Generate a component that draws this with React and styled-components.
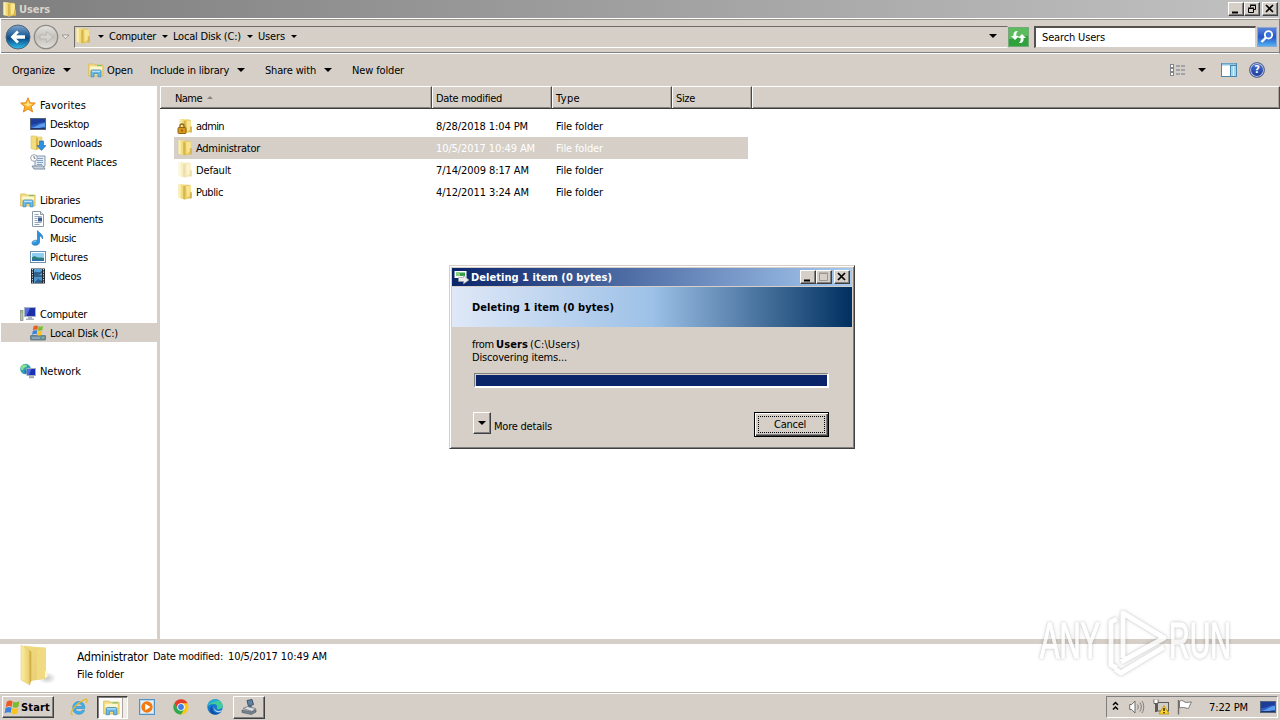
import React, { useLayoutEffect, useRef, useState } from 'react';
import styled, { createGlobalStyle, css } from 'styled-components';

const theme = {
    face: '#d5cfc7',
    light: '#ffffff',
    shadow: '#808080',
    dark: '#404040',
    navy: '#0a246a',
    font: "'DejaVu Sans Condensed', 'DejaVu Sans', 'Liberation Sans', sans-serif"
};

const GlobalStyle = createGlobalStyle`
    * {
        box-sizing: border-box;
    }
    body {
        margin: 0;
        overflow: hidden;
        background: #fff;
        color: #000;
        font-family: ${theme.font};
        font-size: 11px;
        line-height: 14px;
    }
    svg {
        display: block;
        flex: none;
    }
`;

const raised = css`
    background: ${theme.face};
    border: 1px solid;
    border-color: ${theme.light} ${theme.dark} ${theme.dark} ${theme.light};
    box-shadow: inset -1px -1px 0 ${theme.shadow};
`;

const sunken = css`
    border: 1px solid;
    border-color: ${theme.shadow} ${theme.light} ${theme.light} ${theme.shadow};
`;

/* ---------- text ---------- */

const TextBox = styled.span`
    display: block;
    flex: none;
    width: ${p => p.$w}px;
    margin-left: ${p => p.$ml || 0}px;
    padding-top: 2px;
    white-space: nowrap;
    font-weight: ${p => (p.$bold ? 'bold' : 'normal')};
    font-size: ${p => p.$size || 11}px;
    color: ${p => p.$color || 'inherit'};
`;

// Spreads the letters so that the label takes exactly w pixels
const Text = ({ w, ml, bold, size, color, children }) => {
    const ref = useRef(null);
    const [spacing, setSpacing] = useState(0);

    useLayoutEffect(() => {
        const natural = ref.current.getBoundingClientRect().width;
        setSpacing((w - natural) / children.length);
    }, [w, children]);

    return (
        <TextBox $w={w} $ml={ml} $bold={bold} $size={size} $color={color}>
            <span ref={ref} style={{ letterSpacing: spacing }}>{children}</span>
        </TextBox>
    );
};

/* ---------- icons ---------- */

const Svg = ({ size = 16, h, box = '0 0 16 16', children }) => (
    <svg width={size} height={h || size} viewBox={box}>{children}</svg>
);

const FolderIcon = ({ lock, faded, size }) => (
    <Svg size={size} box={lock ? '0 0 15 16' : '1 .8 14 15'}>
        <g opacity={faded ? 0.45 : 1}>
            <path d="M7 1.5h5l1.500 1V14l-5 1z" fill="#e3c55a" />
            <path d="M9 2.5h4.500v8.5l-4 3z" fill="#f7e594" />
            <path d="M2 1h4.5l1.8 1.5V15.5L2 13.8z" fill="#f3dc7e" />
            <path d="M2 1h2v13.2l-2-.5z" fill="#fbf0b4" />
            <path d="M6.3 2.5l2 .3v12.6l-2-.6z" fill="#d8b548" />
            <path d="M12.500 8.5h2v5.7l-2 .5z" fill="#d9b84c" />
        </g>
        {lock && (
            <g>
                <path d="M2.5 10V8a2 2 0 0 1 4 0v2" fill="none" stroke="#8c6a1c" strokeWidth="1.3" />
                <rect x="0.5" y="9.5" width="8" height="6" rx="1" fill="#d9961c" stroke="#94640e" />
                <path d="M4.5 11.5v2" stroke="#5f3c00" />
            </g>
        )}
    </Svg>
);

const BigFolderIcon = () => (
    <Svg size={38} h={44} box="0 0 38 44">
        <defs>
            <linearGradient id="bfFront" x1="0" x2="1">
                <stop offset="0" stopColor="#fbeea9" />
                <stop offset="1" stopColor="#e9cc63" />
            </linearGradient>
            <linearGradient id="bfBack" x1="0" x2="1" y2="1">
                <stop offset="0" stopColor="#f1da80" />
                <stop offset="1" stopColor="#e8cd74" />
            </linearGradient>
            <radialGradient id="bfShade">
                <stop offset="0" stopColor="#999" stopOpacity=".55" />
                <stop offset="1" stopColor="#999" stopOpacity="0" />
            </radialGradient>
        </defs>
        <ellipse cx="28" cy="34" rx="9" ry="6" fill="url(#bfShade)" />
        <path d="M5 1.5L17 3l9 .5v31L12 37z" fill="url(#bfBack)" />
        <path d="M18 5.5l9-2v31l-9 1.500z" fill="#f0da82" />
        <path d="M2 1.2l9 5.3V41L2 36z" fill="url(#bfFront)" stroke="#dcc262" strokeWidth=".5" />
        <path d="M10.500 6.500l1.800 1V37l-1.800 4z" fill="#cfae49" />
        <path d="M26 27l2.500-1v7L26 34z" fill="#fdf8dc" />
    </Svg>
);

const StarIcon = () => (
    <Svg>
        <path d="M8 .8l2 5 5.3.3-4.1 3.5 1.4 5.3L8 12l-4.6 2.9 1.4-5.3L.7 6.1 6 5.8z"
            fill="#fdb62c" stroke="#e5861c" strokeLinejoin="round" />
        <path d="M8 3l1.2 3.7 3.4.3L8 9.5 4 7l2.8-.3z" fill="#ffe48a" />
    </Svg>
);

const DesktopIcon = () => (
    <Svg>
        <rect x=".5" y="2.5" width="15" height="11" fill="#2c5bc0" stroke="#55627c" />
        <path d="M1 3h14v3C9 6 6 9 1 9z" fill="#1d3d9a" />
        <path d="M1 12c5-1 9-5 14-5v4c-5 0-7 2-9 2H1z" fill="#5d9ceb" />
        <path d="M1 12.5h14" stroke="#1c3467" />
    </Svg>
);

const DownloadsIcon = () => (
    <Svg>
        <path d="M1 1h5l2 1h4v12H7l-1 1-5-1.5z" fill="#f3dc7e" stroke="#dcbf60" strokeWidth=".6" />
        <path d="M6 2.5l2 .5v11l-2 1z" fill="#d8b548" />
        <path d="M9.5 6h4v4.5H16l-4.5 5-4.5-5h2.5z" fill="#2f8fe0" stroke="#1d63b0" strokeWidth=".6" />
    </Svg>
);

const RecentIcon = () => (
    <Svg>
        <path d="M5 2h10v10l-2 1H5z" fill="#e4ebf2" stroke="#8497ac" />
        <path d="M7 4.5h6M7 6.5h6M7 8.5h6M7 10.5h5" stroke="#7fa1c6" />
        <path d="M2 12h11l2 3H4z" fill="#c9d4df" stroke="#7f8fa2" />
        <circle cx="4" cy="4" r="3.3" fill="#fff" stroke="#9aa5b2" />
        <path d="M4 2v2.2h1.6" stroke="#4c5a6b" fill="none" strokeWidth=".8" />
    </Svg>
);

const LibraryIcon = ({ size }) => (
    <Svg size={size}>
        <path d="M.6 3.5V2h5l1.2 1h8.3v11H.6z" fill="#f4dd80" stroke="#d9bb58" strokeWidth=".8" />
        <path d="M2 4.5h12v3H2z" fill="#fdf6cf" />
        <path d="M9 3h5v1.2H9z" fill="#79c37a" />
        <path d="M3 14.8V9.6c0-1 .6-1.6 1.6-1.6h6.8c1 0 1.6.6 1.6 1.6v5.2h-3v-3.3H6v3.3z"
            fill="#6bb9e6" stroke="#3d8fc8" strokeWidth=".8" />
        <path d="M4 9.3h8" stroke="#cdeafa" />
    </Svg>
);

const DocumentIcon = () => (
    <Svg>
        <path d="M2.5.5h8l3 3v12h-11z" fill="#fff" stroke="#8c99a8" />
        <path d="M10.5.5v3h3" fill="#dce4ec" stroke="#8c99a8" />
        <path d="M4.500 3.500h4M4.500 5.500h7M4.500 7.500h3M4.500 9.500h3M4.500 11.500h7M4.500 13.500h5" stroke="#93a5b8" />
        <rect x="8" y="6.500" width="4" height="4" fill="#3a5e95" />
    </Svg>
);

const MusicIcon = () => (
    <Svg>
        <path d="M8 .8c.5 2.300 5.700 3.200 4.500 8.200-.5-2-1.500-2.700-3-3v6c0 2-1.800 3.300-4.200 3.300-2 0-3.500-1-3.300-2.600.2-1.700 2.600-3 5.500-2.400V.8z"
            fill="#2f94dc" stroke="#1868ac" strokeWidth=".6" />
        <path d="M3.200 12.500c.3-1 1.800-1.500 3-1.300" stroke="#a9dcfa" fill="none" />
    </Svg>
);

const PicturesIcon = () => (
    <Svg>
        <rect x=".5" y="2.500" width="15" height="11" fill="#fff" stroke="#6f8fb0" />
        <rect x="2" y="4" width="12" height="8" fill="#8fd0f2" />
        <path d="M2 8.500c3-3 4 0 7 0 2 0 3-.5 5 .5v3H2z" fill="#2f7f76" />
        <path d="M2 10.500h12V12H2z" fill="#276fb5" />
    </Svg>
);

const VideosIcon = () => (
    <Svg>
        <rect x="1" y=".5" width="14" height="15" fill="#232a33" />
        <path d="M2.500 1v14M13.500 1v14" stroke="#cfd6dc" strokeDasharray="1.300 1.200" />
        <rect x="4" y="1" width="8" height="6.500" fill="#58a4da" />
        <rect x="4" y="8.500" width="8" height="6.500" fill="#4a95cc" />
        <path d="M4 5c2-3 3 1 8-2v2l-4 2.500H4zM5 14l3-3 4 2v2H5z" fill="#2c5f8c" />
    </Svg>
);

const ComputerIcon = () => (
    <Svg>
        <rect x=".500" y="4.500" width="2.500" height="10" fill="#b9c3ae" stroke="#7e8a78" strokeWidth=".7" />
        <path d="M1 6h1.500" stroke="#6dbb44" />
        <rect x="4.500" y="1.500" width="11" height="9" fill="#1c2fa8" stroke="#a8b2c2" />
        <path d="M5 2h5L6.500 10H5z" fill="#5470dc" />
        <path d="M8 11h4v1.500h2V14H6v-1.500h2z" fill="#aab3be" />
    </Svg>
);

const Flag = () => (
    <g>
        <path d="M2 2C4 .6 5.500.7 7.300 1.600L6.500 6.500C4.800 5.600 3.300 5.600 1 6.900z" fill="#ee5a26" />
        <path d="M8 1.900c1.800.8 3.500.8 5.500-.3l-.9 5c-2 1-3.600 1-5.400.1z" fill="#7dbb2c" />
        <path d="M.9 7.700c2.200-1.200 3.700-1.200 5.500-.4L5.600 12c-1.800-.9-3.300-.8-5.500.5z" fill="#3c82dc" />
        <path d="M7.100 7.600c1.800.9 3.400.9 5.400-.1l-.9 5c-2 1-3.500 1-5.300.1z" fill="#fbc21c" />
    </g>
);

const DiskIcon = () => (
    <Svg>
        <path d="M1.500 9h13l1 2.500H.5z" fill="#ccd5dc" />
        <rect x=".500" y="10.500" width="15" height="4.500" rx=".5" fill="#6d8d9c" stroke="#506b78" strokeWidth=".7" />
        <path d="M2 13h8" stroke="#a9c2cc" />
        <circle cx="13" cy="12.800" r=".8" fill="#7df26b" />
        <g transform="translate(2 -.3) scale(.82)"><Flag /></g>
    </Svg>
);

const NetworkIcon = () => (
    <Svg>
        <circle cx="5.500" cy="6" r="5.300" fill="#2fa0b8" />
        <path d="M2 2.500c2-1.500 5-1 5 .5S4 4 3.500 6 1 7 .5 5z" fill="#8be08a" />
        <path d="M5 7c2-.5 3 2 1 4C4 10.500 4 8 5 7z" fill="#2c6fc0" />
        <rect x="7" y="5.500" width="8.500" height="7" fill="#1c2fb8" stroke="#a3adbd" />
        <path d="M7.500 6h4L9 12H7.500z" fill="#4f6cdf" />
        <path d="M9 13.200h5v2H9z" fill="#9aa5b3" />
    </Svg>
);

const BackIcon = () => (
    <Svg size={26} box="0 0 26 26">
        <defs>
            <linearGradient id="backFill" x2="0" y2="1">
                <stop offset="0" stopColor="#7fa6cc" />
                <stop offset=".4" stopColor="#2a669f" />
                <stop offset=".55" stopColor="#0c4a86" />
                <stop offset="1" stopColor="#2fc0ee" />
            </linearGradient>
        </defs>
        <circle cx="13" cy="13" r="12" fill="url(#backFill)" stroke="#50647c" />
        <path d="M5.500 13l6.500-6.500 1.900 1.900-2.700 2.900H20v3.400h-8.800l2.700 2.900-1.900 1.900z" fill="#fff" />
    </Svg>
);

const ForwardIcon = () => (
    <Svg size={26} box="0 0 26 26">
        <defs>
            <linearGradient id="fwdFill" x2="0" y2="1">
                <stop offset="0" stopColor="#e6e4e0" />
                <stop offset=".5" stopColor="#c4c1bc" />
                <stop offset="1" stopColor="#e2e0dc" />
            </linearGradient>
        </defs>
        <circle cx="13" cy="13" r="11.700" fill="url(#fwdFill)" stroke="#8b8985" strokeWidth="1.300" />
        <path d="M20 13l-6.500-5.500V11H7v4h6.500v3.500z" fill="#d6d3ce" stroke="#b4b1ab" strokeWidth=".8" />
    </Svg>
);

const RefreshIcon = () => (
    <Svg size={21} h={20} box="0 0 21 20">
        <rect x=".5" y=".5" width="20" height="19" fill="#2fa23c" stroke="#73a878" />
        <path d="M1 1h19v8C13 9 8 12 1 12z" fill="#5cbb5c" />
        <path d="M10 4C6.500 3.500 5 6 5.500 9H3l4 4 4-4H8.500C8 7 8.500 5.500 10 4z" fill="#fff" />
        <path d="M11 16c3.500.5 5-2 4.500-5H18l-4-4-4 4h2.500c.5 2 0 3.500-1.500 5z" fill="#fff" />
    </Svg>
);

const SearchIcon = () => (
    <Svg size={20} box="0 0 20 20">
        <defs>
            <linearGradient id="searchFill" x2="0" y2="1">
                <stop offset="0" stopColor="#5f86d8" />
                <stop offset=".5" stopColor="#2456c8" />
                <stop offset="1" stopColor="#56b6f4" />
            </linearGradient>
        </defs>
        <rect x=".5" y=".5" width="19" height="19" fill="url(#searchFill)" stroke="#8ea6d0" />
        <circle cx="11.500" cy="7.800" r="3.700" fill="#3a74d8" stroke="#fff" strokeWidth="1.800" />
        <path d="M9 10.500L4.500 15" stroke="#fff" strokeWidth="2.400" />
    </Svg>
);

const ViewIcon = () => (
    <Svg>
        {[2, 6, 10].map(y => (
            <g key={y}>
                <rect x=".5" y={y + 0.5} width="3" height="3" fill="#fff" stroke="#81868c" />
                <path d={`M6 ${y + 2}h4M11 ${y + 2}h4`} stroke="#6d7a8e" strokeWidth="1.200" />
            </g>
        ))}
    </Svg>
);

const PreviewIcon = () => (
    <Svg>
        <rect x=".5" y="1.500" width="15" height="13" fill="#fff" stroke="#4b86ad" />
        <path d="M1 2.500h14" stroke="#8ec3e3" strokeWidth="2" />
        <rect x="9.500" y="3.500" width="6" height="11" fill="#9fd3ee" stroke="#4b86ad" />
        <path d="M12.500 4v10" stroke="#d8f0fb" />
    </Svg>
);

const HelpGlyph = styled.div`
    width: 16px;
    height: 16px;
    border-radius: 50%;
    border: 1px solid #5d6a8c;
    box-shadow: inset 0 0 0 1px #b7c3e4;
    background: linear-gradient(#4a70cf, #1b3a9e);
    color: #fff;
    font-weight: bold;
    font-size: 11px;
    line-height: 14px;
    text-align: center;
`;

const Triangle = styled.i`
    flex: none;
    width: 0;
    height: 0;
    margin-left: ${p => p.$ml || 0}px;
    border: solid transparent;
    border-width: ${p => p.$s || 4}px ${p => p.$s || 4}px 0;
    border-top-color: #000;
`;

const SmallCaret = () => (
    <Svg size={9} h={6} box="0 0 9 6">
        <path d="M1 1h7L4.500 4.800z" fill="#f0eeea" stroke="#8c8983" strokeWidth=".8" />
    </Svg>
);

/* ---------- title bar ---------- */

const TitleBar = styled.div`
    display: flex;
    align-items: center;
    height: 18px;
    padding: 0 2px;
    color: #d8d4cd;
    background: linear-gradient(90deg, #7f7f7f, #c1c1c1);
`;

const WinButton = styled.div`
    ${raised}
    width: 16px;
    height: 14px;
    margin-left: ${p => p.$ml || 0}px;
    svg {
        margin: -1px;
    }
`;

const glyphs = {
    min: <path d="M4 10.500h6" stroke="#000" strokeWidth="2" />,
    restore: (
        <path d="M6.500 5.500v-2h5v4h-2M6 3h6M4.500 6.500h5v4h-5zM4 6h6" fill="none" stroke="#000" />
    ),
    max: <path d="M3.500 3.500h8v7h-8zM3 3h9" fill="none" stroke="#9b968f" />,
    close: <path d="M4 3l7 7M11 3l-7 7" stroke="#000" strokeWidth="1.700" />
};

const WindowButtons = ({ middle }) => ['min', middle, 'close'].map(g => (
    <WinButton key={g} $ml={g === 'close' ? 2 : 0}>
        <Svg size={16} h={14} box="0 0 16 14">{glyphs[g]}</Svg>
    </WinButton>
));

const Grow = styled.div`
    flex: 1;
`;

/* ---------- address bar ---------- */

const AddressBar = styled.div`
    display: flex;
    align-items: center;
    height: 36px;
    padding: 2px 1px 0 4px;
    background: ${theme.face};
    border: 1px solid ${theme.light};
    border-right-color: ${theme.shadow};
    box-shadow: inset 0 1px 0 #98948e, inset 0 -1px 0 ${theme.shadow};
`;

const NavPill = styled.div`
    display: flex;
    gap: 2px;
    align-items: center;
    width: 69px;
    svg:last-child {
        margin-left: 0;
    }
`;

const PathField = styled.div`
    display: flex;
    align-items: center;
    width: 934px;
    height: 22px;
    padding-bottom: 2px;
    border: 1px solid;
    border-color: #6d6a66 transparent ${theme.light} #6d6a66;
`;

const SearchField = styled.div`
    display: flex;
    align-items: center;
    width: 222px;
    height: 22px;
    margin: 0 1px 0 5px;
    padding: 0 0 2px 6px;
    background: #fff;
    border: solid;
    border-width: 2px 1px 1px 2px;
    border-color: #55524e ${theme.face} ${theme.face} #55524e;
`;

/* ---------- command bar ---------- */

const CommandBar = styled.div`
    display: flex;
    align-items: center;
    height: 32px;
    padding: 0 15px 0 12px;
    background: ${theme.face};
`;

const Spacer = styled.div`
    width: ${p => p.$w}px;
`;

/* ---------- body ---------- */

const Main = styled.div`
    display: flex;
    height: 553px;
`;

const Sidebar = styled.div`
    width: 160px;
    padding-top: 9px;
    background: linear-gradient(90deg, #fff 157px, ${theme.face} 157px);
`;

const SideItem = styled.div`
    display: flex;
    align-items: center;
    gap: 4px;
    height: 19px;
    margin-left: 1px;
    padding-left: ${p => (p.$child ? 29 : 19)}px;
    margin-bottom: ${p => (p.$last ? 19 : 0)}px;
    background: ${p => (p.$active ? theme.face : 'transparent')};
`;

const FileList = styled.div`
    flex: 1;
`;

const ListHeader = styled.div`
    display: grid;
    grid-template-columns: 272px 120px 120px 80px 1fr;
    height: 23px;
    background: ${theme.face};
    border-bottom: 1px solid #3e3b38;
    box-shadow: inset 0 -1px 0 ${theme.shadow};
`;

const HeaderCell = styled.div`
    display: flex;
    align-items: center;
    padding-left: ${p => (p.$first ? 14 : 3)}px;
    border: solid;
    border-width: 1px 1px 0;
    border-color: ${theme.light} #4a4744 transparent ${theme.light};
    box-shadow: inset -1px 0 0 #aaa59e;
`;

const Rows = styled.div`
    padding: 6px 0 0 14px;
`;

const FileRow = styled.div`
    display: grid;
    grid-template-columns: 22px 240px 120px 192px;
    align-items: center;
    width: 574px;
    height: 22px;
    background: ${p => (p.$active ? theme.face : 'transparent')};
    color: ${p => (p.$active ? '#fff' : '#000')};
    svg {
        margin-left: 3px;
    }
`;

const DetailsPane = styled.div`
    display: flex;
    height: 53px;
    padding-left: 19px;
    border-top: 5px solid ${theme.face};
    background: #fff;
`;

const DetailsText = styled.div`
    display: flex;
    flex-direction: column;
    gap: 4px;
    padding: 5px 0 0 20px;
`;

const Line = styled.div`
    display: flex;
    align-items: center;
    height: ${p => p.$h || 14}px;
`;

/* ---------- taskbar ---------- */

const TaskBar = styled.div`
    display: flex;
    align-items: center;
    height: 28px;
    padding: 1px 2px 0 2px;
    background: ${theme.face};
    border-top: 1px solid #bdb8b0;
    box-shadow: inset 0 1px 0 #fff;
`;

const StartButton = styled.div`
    ${raised}
    display: flex;
    align-items: center;
    gap: 1px;
    width: 52px;
    height: 22px;
    padding-left: 1px;
`;

const TaskItem = styled.div`
    display: flex;
    align-items: center;
    justify-content: center;
    width: ${p => p.$w}px;
    height: 23px;
    margin-left: ${p => p.$ml}px;
    ${p => p.$raised && raised}
    ${p => p.$pressed && css`
        background: #fbfaf8;
        border: 1px solid;
        border-color: #3e3b38 #fff #fff #3e3b38;
        padding-right: 3px;
        box-shadow: inset 1px 1px 0 ${theme.shadow}, inset -4px 0 0 #f0ede9, inset -5px 0 0 #a9a49d;
    `}
`;

const Tray = styled.div`
    ${sunken}
    display: flex;
    align-items: center;
    width: 172px;
    height: 22px;
    padding-left: 5px;
    gap: 8px;
    svg:last-child {
        margin-left: 4px;
    }
`;

const IeIcon = () => (
    <Svg size={18} box="0 0 18 18">
        <path d="M14.800 10.500H5.500c.2 2 1.700 3.200 3.700 3.200 1.400 0 2.300-.5 3-1.500h2.400C13.700 15 11.700 16.200 9 16.200c-3.800 0-6.300-2.600-6.300-6.300S5.200 3.500 8.900 3.500s6.100 2.700 5.900 7zM5.600 8.400h6.600C12 6.800 10.800 5.800 9 5.800S5.900 6.800 5.600 8.400z"
            fill="#3fb0e8" stroke="#1f7fc4" strokeWidth=".5" />
        <path d="M3 16.500C-.5 17.500 1 12 6 7.500S17-.5 17 2.200c0 1-.5 2-1 2.800" fill="none" stroke="#eab92f" strokeWidth="1.300" />
    </Svg>
);

const PlayerIcon = () => (
    <Svg>
        <rect x=".5" y=".5" width="15" height="15" fill="#b9d9ef" stroke="#5592c4" />
        <rect x="2" y="2" width="12" height="12" fill="#e5f1fa" />
        <circle cx="8" cy="8" r="5.700" fill="#f27a12" />
        <path d="M6.200 4.800v6.400L11.500 8z" fill="#fff" />
    </Svg>
);

const ChromeIcon = () => (
    <Svg>
        <circle cx="8" cy="8" r="7.600" fill="#fcc719" />
        <path d="M1.400 4.200A7.600 7.600 0 0 1 14.600 4.200H8L4.700 9.900z" fill="#e33b2e" />
        <path d="M1.400 4.200A7.600 7.600 0 0 0 8 15.600l3.300-5.700H4.700z" fill="#2da94f" />
        <circle cx="8" cy="8" r="3.800" fill="#fff" />
        <circle cx="8" cy="8" r="2.900" fill="#3f7de8" />
    </Svg>
);

const EdgeIcon = () => (
    <Svg>
        <circle cx="8" cy="8" r="7.700" fill="#1a78cf" />
        <path d="M.4 8C.5 3.500 4 .3 8 .3c4.500 0 7.700 3 7.700 6.500 0 2-1.600 3.500-3.700 3.500-1.500 0-2.500-.6-2.100-1.300.8-1.300.2-4-2.900-4C4 5 1 6 .4 8z" fill="#3fcb9a" />
        <path d="M.4 8C.5 4 4 .3 8 .3c2 0 3.600.6 5 1.700C8 1.500 2 4 .4 8z" fill="#29a9dc" />
        <path d="M6.500 6.500C4 8 5 13.500 10 14c2 .2 3.700-.7 4.600-2-1.500 3-6 4.500-9.200 2.800C2 13 2.500 7.500 6.500 6.500z" fill="#0f4f9e" />
        <path d="M7.200 7c-1 2 1 5 4.300 4.900 1.500 0 2.700-.5 3.300-1-.3.800-.8 1.600-1.400 2.200C9 14.500 5.500 10 7.200 7z" fill="#e9f4fa" opacity=".75" />
    </Svg>
);

const DeviceIcon = () => (
    <Svg>
        <path d="M6 1.500l5-1 1.500 5-5 2z" fill="#5f81a4" stroke="#3f5468" />
        <path d="M7.500 7l3 1.500" stroke="#56606c" strokeWidth="2" />
        <path d="M2 9.500L6.500 7.500l8 2-3.500 3z" fill="#d7dde2" stroke="#69747f" strokeWidth=".8" />
        <path d="M1 11l9.500 2 4.500-2.500v2.500l-4.500 2.500L1 13.500z" fill="#78848e" stroke="#4c565f" strokeWidth=".6" />
    </Svg>
);

const SpeakerIcon = () => (
    <Svg>
        <path d="M.7 5.500h2L6 2v12l-3.300-3.500h-2z" fill="#fff" stroke="#6f6c68" />
        <path d="M8.500 5.500c1 1.500 1 3.500 0 5M10.800 3.500c2 2.500 2 6.500 0 9M13 2c2.300 3.500 2.300 8.500 0 12" fill="none" stroke="#7d7a76" />
    </Svg>
);

const NetTrayIcon = () => (
    <Svg>
        <rect x="4.500" y="3.500" width="11" height="8.500" fill="#d2cfca" stroke="#5d5b58" />
        <path d="M1 .5v4h1.500V13M5 .5v4H3.500V13M1 4.500h4" fill="none" stroke="#5d5b58" />
        <path d="M1.500 1h3v3h-3z" fill="#fff" />
        <path d="M11 6.500l5 8.500H6z" fill="#ffd52e" stroke="#c08f00" strokeWidth=".8" strokeLinejoin="round" />
        <path d="M11 9v3M11 13v1.200" stroke="#000" strokeWidth="1.200" />
    </Svg>
);

const ActionFlagIcon = () => (
    <Svg>
        <path d="M1.500 1v14.500" stroke="#6f6c68" strokeWidth="1.400" />
        <path d="M2.500 2c3-1 4 0 5.500 1.200 2 .6 4-.2 6.500-.2-1.500 2-1.500 4-3 6.300-2 .5-3-.8-5-.8-1.500-.3-2.500 0-4 .5z" fill="#fff" stroke="#7b7874" />
    </Svg>
);

const TrayArrows = () => (
    <Svg size={9} h={12} box="0 1 9 12">
        <path d="M1 5l2.500-2.500L6 5M1 9.500L3.500 7 6 9.500" fill="none" stroke="#000" strokeWidth="1.500" />
    </Svg>
);

/* ---------- dialog ---------- */

const Dialog = styled.div`
    position: absolute;
    left: 449px;
    top: 265px;
    width: 406px;
    height: 184px;
    padding: 2px;
    background: ${theme.face};
    border: 1px solid;
    border-color: ${theme.face} ${theme.dark} ${theme.dark} ${theme.face};
    box-shadow: inset 1px 1px 0 #fff, inset -1px -1px 0 ${theme.shadow};
`;

const DialogTitle = styled.div`
    display: flex;
    align-items: center;
    height: 18px;
    padding: 0 2px;
    color: #fff;
    background: linear-gradient(90deg, ${theme.navy}, #a6caf0);
`;

const DialogBanner = styled.div`
    display: flex;
    align-items: center;
    height: 40px;
    margin-top: 1px;
    padding-left: 20px;
    background: linear-gradient(90deg, #dfe8f7 0%, #9dc1e7 50%, #003060 100%);
`;

const DialogBody = styled.div`
    padding: 10px 23px 0 20px;
`;

const Progress = styled.div`
    ${sunken}
    height: 15px;
    margin: 10px 0 24px 2px;
    padding: 1px 0 0 1px;
    border-width: 1px 2px 2px 1px;
    background: ${theme.navy} content-box;
`;

const DialogFooter = styled.div`
    display: flex;
    align-items: flex-start;
`;

const DropButton = styled.div`
    ${raised}
    display: flex;
    align-items: center;
    justify-content: center;
    width: 18px;
    height: 22px;
    margin: 0 3px 0 1px;
`;

const CancelButton = styled.div`
    width: 75px;
    height: 25px;
    padding: 3px;
    border: 1px solid #000;
    background: ${theme.face};
    box-shadow: inset 1px 1px 0 #fff, inset -1px -1px 0 ${theme.dark}, inset -2px -2px 0 ${theme.shadow};
`;

const Focus = styled.div`
    display: flex;
    align-items: center;
    height: 17px;
    padding: 0 0 2px 15px;
    border: 1px dotted #000;
`;

const MoreWrap = styled.div`
    padding-top: 6px;
`;

const CopyIcon = () => (
    <Svg>
        <path d="M.5 2h12v7H.5z" fill="#fff" />
        <path d="M2 3.500h9v3.500H2z" fill="#35a042" />
        <path d="M2 3.500h4v3.500H2z" fill="#7fcf7d" />
        <path d="M4.500 8.500h5V6.500L15 11l-5.500 4v-2.500h-5z" fill="#e9eceb" stroke="#8f9896" strokeWidth=".6" />
    </Svg>
);

/* ---------- watermark ---------- */

const Watermark = styled.div`
    position: absolute;
    left: 1029px;
    top: 599px;
    filter: drop-shadow(0 0 1px rgba(0, 0, 0, 0.2)) drop-shadow(0 0 2px rgba(0, 0, 0, 0.16));
    opacity: 0.8;
    svg {
        overflow: visible;
    }
    text {
        font-family: 'Liberation Sans', sans-serif;
        font-size: 50px;
        fill: #fff;
        stroke: #fff;
        stroke-width: 1.4px;
    }
`;

const places = [
    { title: 'Favorites', icon: StarIcon, w: 46 },
    { title: 'Desktop', icon: DesktopIcon, w: 39, child: true },
    { title: 'Downloads', icon: DownloadsIcon, w: 52, child: true },
    { title: 'Recent Places', icon: RecentIcon, w: 67, child: true, last: true },
    { title: 'Libraries', icon: LibraryIcon, w: 40 },
    { title: 'Documents', icon: DocumentIcon, w: 53, child: true },
    { title: 'Music', icon: MusicIcon, w: 26, child: true },
    { title: 'Pictures', icon: PicturesIcon, w: 38, child: true },
    { title: 'Videos', icon: VideosIcon, w: 31, child: true, last: true },
    { title: 'Computer', icon: ComputerIcon, w: 47 },
    { title: 'Local Disk (C:)', icon: DiskIcon, w: 68, child: true, active: true, last: true },
    { title: 'Network', icon: NetworkIcon, w: 41 }
];

const files = [
    { name: 'admin', w: 28, date: '8/28/2018 1:04 PM', dw: 92, lock: true },
    { name: 'Administrator', w: 64, date: '10/5/2017 10:49 AM', dw: 99, active: true },
    { name: 'Default', w: 35, date: '7/14/2009 8:17 AM', dw: 93, faded: true },
    { name: 'Public', w: 27, date: '4/12/2011 3:24 AM', dw: 93 }
];

const App = () => (
    <>
        <GlobalStyle />
        <TitleBar>
            <FolderIcon size={15} />
            <Text w={31} ml={2} bold>Users</Text>
            <Grow />
            <WindowButtons middle="restore" />
        </TitleBar>

        <AddressBar>
            <NavPill>
                <BackIcon />
                <ForwardIcon />
                <SmallCaret />
            </NavPill>
            <PathField>
                <FolderIcon size={16} />
                <Triangle $ml={7} $s={3} />
                <Text w={47} ml={5}>Computer</Text>
                <Triangle $ml={6} $s={3} />
                <Text w={68} ml={5}>Local Disk (C:)</Text>
                <Triangle $ml={6} $s={3} />
                <Text w={27} ml={5}>Users</Text>
                <Triangle $ml={6} $s={3} />
                <Grow />
                <Triangle />
                <Spacer $w={10} />
            </PathField>
            <RefreshIcon />
            <SearchField>
                <Text w={63}>Search Users</Text>
            </SearchField>
            <SearchIcon />
        </AddressBar>

        <CommandBar>
            <Text w={43}>Organize</Text>
            <Triangle $ml={8} />
            <Spacer $w={17} />
            <LibraryIcon />
            <Text w={26} ml={3}>Open</Text>
            <Text w={79} ml={17}>Include in library</Text>
            <Triangle $ml={8} />
            <Text w={51} ml={20}>Share with</Text>
            <Triangle $ml={8} />
            <Text w={52} ml={20}>New folder</Text>
            <Grow />
            <ViewIcon />
            <Triangle $ml={12} />
            <Spacer $w={15} />
            <PreviewIcon />
            <Spacer $w={12} />
            <HelpGlyph>?</HelpGlyph>
        </CommandBar>

        <Main>
            <Sidebar>
                {places.map(({ title, icon: Icon, w, child, last, active }) => (
                    <SideItem key={title} $child={child} $last={last} $active={active}>
                        <Icon />
                        <Text w={w}>{title}</Text>
                    </SideItem>
                ))}
            </Sidebar>
            <FileList>
                <ListHeader>
                    <HeaderCell $first>
                        <Text w={27}>Name</Text>
                        <Spacer $w={5} />
                        <Svg size={6} h={6} box="0 0 6 6"><path d="M0 4h6L3 1z" fill="#8b8680" /></Svg>
                    </HeaderCell>
                    <HeaderCell><Text w={66}>Date modified</Text></HeaderCell>
                    <HeaderCell><Text w={24}>Type</Text></HeaderCell>
                    <HeaderCell><Text w={19}>Size</Text></HeaderCell>
                    <HeaderCell />
                </ListHeader>
                <Rows>
                    {files.map(f => (
                        <FileRow key={f.name} $active={f.active}>
                            <FolderIcon lock={f.lock} faded={f.faded} />
                            <Text w={f.w} color="#000">{f.name}</Text>
                            <Text w={f.dw}>{f.date}</Text>
                            <Text w={47}>File folder</Text>
                        </FileRow>
                    ))}
                </Rows>
            </FileList>
        </Main>

        <DetailsPane>
            <BigFolderIcon />
            <DetailsText>
                <Line>
                    <Text w={71} size={12}>Administrator</Text>
                    <Text w={70} ml={5}>Date modified:</Text>
                    <Text w={99} ml={5}>10/5/2017 10:49 AM</Text>
                </Line>
                <Line><Text w={47}>File folder</Text></Line>
            </DetailsText>
        </DetailsPane>

        <TaskBar>
            <StartButton>
                <Svg size={16} box="-.5 -.5 14.5 14.5"><Flag /></Svg>
                <Text w={29} bold>Start</Text>
            </StartButton>
            <TaskItem $w={18} $ml={16}><IeIcon /></TaskItem>
            <TaskItem $w={31} $ml={9} $pressed><LibraryIcon size={17} /></TaskItem>
            <TaskItem $w={16} $ml={11}><PlayerIcon /></TaskItem>
            <TaskItem $w={16} $ml={18}><ChromeIcon /></TaskItem>
            <TaskItem $w={16} $ml={18}><EdgeIcon /></TaskItem>
            <TaskItem $w={32} $ml={10} $raised><DeviceIcon /></TaskItem>
            <Grow />
            <Tray>
                <TrayArrows />
                <SpeakerIcon />
                <NetTrayIcon />
                <ActionFlagIcon />
                <Text w={39} ml={8}>7:22 PM</Text>
                <DesktopIcon />
            </Tray>
        </TaskBar>

        <Dialog>
            <DialogTitle>
                <CopyIcon />
                <Text w={141} ml={1} bold>Deleting 1 item (0 bytes)</Text>
                <Grow />
                <WindowButtons middle="max" />
            </DialogTitle>
            <DialogBanner>
                <Text w={142} bold>Deleting 1 item (0 bytes)</Text>
            </DialogBanner>
            <DialogBody>
                <Line $h={13}>
                    <Text w={22}>from</Text>
                    <Text w={32} ml={2} bold>Users</Text>
                    <Text w={50} ml={2}>(C:\Users)</Text>
                </Line>
                <Line $h={13}><Text w={95}>Discovering items...</Text></Line>
                <Progress />
                <DialogFooter>
                    <DropButton><Triangle /></DropButton>
                    <MoreWrap><Text w={58}>More details</Text></MoreWrap>
                    <Grow />
                    <CancelButton>
                        <Focus><Text w={32}>Cancel</Text></Focus>
                    </CancelButton>
                </DialogFooter>
            </DialogBody>
        </Dialog>

        <Watermark>
            <svg width="230" height="84" viewBox="-5 -5 230 84">
                <text x="6" y="54" textLength="60" lengthAdjust="spacingAndGlyphs">ANY</text>
                <text x="135" y="54" textLength="62" lengthAdjust="spacingAndGlyphs">RUN</text>
                <path d="M89 54V9l41 25-43 24M83 15l-6 3v43l6 3M130 43L87 69l-6-4" fill="none" stroke="#fff" strokeWidth="5" strokeLinejoin="round" />
            </svg>
        </Watermark>
    </>
);

export default App;
